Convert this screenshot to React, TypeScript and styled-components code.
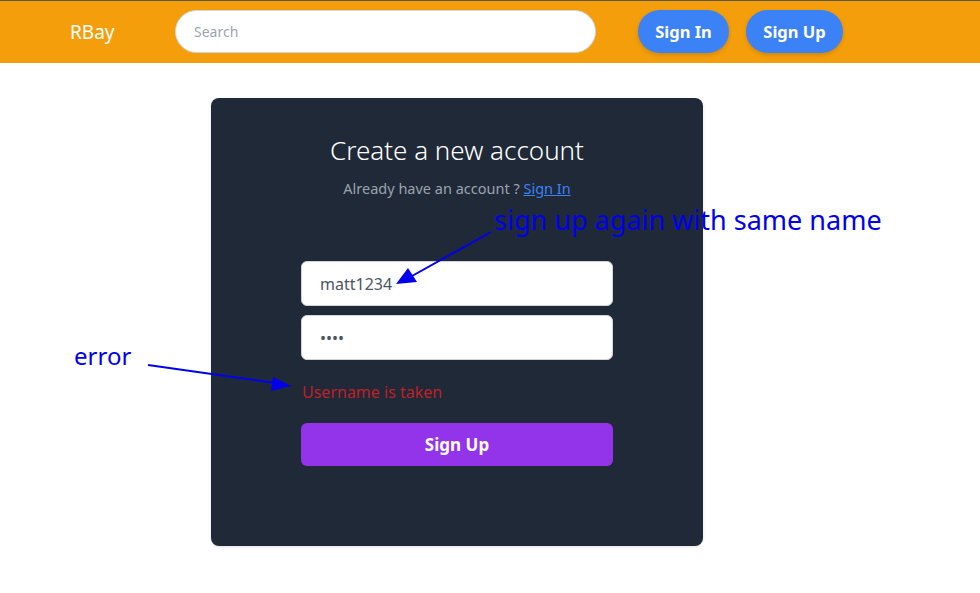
import styled, { createGlobalStyle } from 'styled-components'

const GlobalStyle = createGlobalStyle`
  html, body {
    margin: 0;
    padding: 0;
    background: #fff;
    font-family: 'Noto Sans', 'Open Sans', sans-serif;
  }
  * {
    box-sizing: border-box;
  }
`

const Page = styled.div`
  position: relative;
  width: 100%;
  min-height: 593px;
`

const Header = styled.header`
  height: 63px;
  background: #f59e0b;
  border-top: 1px solid #5b5650;
  display: flex;
  align-items: center;
  padding-left: 70px;
  padding-bottom: 1px;
`

const Logo = styled.div`
  color: #fff;
  font-size: 19px;
  width: 105px;
`

const Search = styled.input`
  width: 421px;
  height: 43px;
  border-radius: 999px;
  border: 1px solid #d1d5db;
  background: #fff;
  padding: 0 18px;
  font-family: inherit;
  font-size: 14px;
  outline: none;

  &::placeholder {
    color: #9ca3af;
  }
`

const NavButtons = styled.div`
  display: flex;
  gap: 17px;
  margin-left: 42px;
`

const PillButton = styled.button<{ $w: number }>`
  width: ${(p) => p.$w}px;
  height: 43px;
  border: 0;
  border-radius: 999px;
  background: #3b82f6;
  color: #fff;
  font-family: inherit;
  font-weight: 700;
  font-size: 16.5px;
  box-shadow: 0 2px 4px rgba(0, 0, 0, 0.15);
  cursor: pointer;
`

const Main = styled.main`
  display: flex;
  padding-top: 35px;
  padding-left: 211px;
`

const Card = styled.section`
  width: 492px;
  height: 448px;
  background: #1f2937;
  border-radius: 8px;
  box-shadow: 0 1px 3px rgba(0, 0, 0, 0.12);
  display: flex;
  flex-direction: column;
  align-items: center;
  padding-top: 36px;
`

const Title = styled.h1`
  margin: 0;
  color: #fff;
  font-weight: 300;
  font-size: 26px;
  line-height: 32px;
`

const Subtitle = styled.p`
  margin: 12px 0 0;
  color: #9ca3af;
  font-size: 14.5px;
  line-height: 20px;

  a {
    color: #3b82f6;
    text-decoration: underline;
  }
`

const Form = styled.form`
  width: 312px;
  margin-top: 63px;
  display: flex;
  flex-direction: column;
`

const Field = styled.input`
  height: 45px;
  border: 1px solid #d1d5db;
  border-radius: 6px;
  background: #fff;
  padding: 0 18px;
  font-family: inherit;
  font-size: 16px;
  color: #4b5563;
  margin-bottom: 9px;
  outline: none;
`

const ErrorText = styled.div`
  color: #be202a;
  font-size: 16px;
  line-height: 20px;
  margin-top: 13px;
  padding-left: 1px;
`

const Submit = styled.button`
  margin-top: 21px;
  height: 43px;
  border: 0;
  border-radius: 6px;
  background: #9333ea;
  color: #fff;
  font-family: inherit;
  font-weight: 700;
  font-size: 17px;
  cursor: pointer;
`

const Note = styled.div<{ $x: number; $y: number; $size: number }>`
  position: absolute;
  left: ${(p) => p.$x}px;
  top: ${(p) => p.$y}px;
  color: #0000ee;
  font-size: ${(p) => p.$size}px;
  line-height: 1;
  white-space: nowrap;
  pointer-events: none;
`

const Arrows = styled.svg`
  position: absolute;
  left: 0;
  top: 0;
  pointer-events: none;
`

export default function App() {
  return (
    <Page>
      <GlobalStyle />
      <Header>
        <Logo>RBay</Logo>
        <Search placeholder="Search" />
        <NavButtons>
          <PillButton $w={91}>Sign In</PillButton>
          <PillButton $w={97}>Sign Up</PillButton>
        </NavButtons>
      </Header>

      <Main>
        <Card>
          <Title>Create a new account</Title>
          <Subtitle>
            Already have an account ? <a href="#">Sign In</a>
          </Subtitle>
          <Form>
            <Field defaultValue="matt1234" />
            <Field type="password" defaultValue="abcd" />
            <ErrorText>Username is taken</ErrorText>
            <Submit type="button">Sign Up</Submit>
          </Form>
        </Card>
      </Main>

      <Note $x={494} $y={206} $size={27}>sign up again with same name</Note>
      <Note $x={74} $y={344} $size={24}>error</Note>

      <Arrows width="980" height="593" viewBox="0 0 980 593">
        <line x1="491" y1="232" x2="412" y2="276" stroke="#0000ee" strokeWidth="2" />
        <polygon points="396,284 408,268 417,282" fill="#0000ee" />
        <line x1="148" y1="365" x2="275" y2="383" stroke="#0000ee" strokeWidth="2" />
        <polygon points="291,386 273,377 271,391" fill="#0000ee" />
      </Arrows>
    </Page>
  )
}
